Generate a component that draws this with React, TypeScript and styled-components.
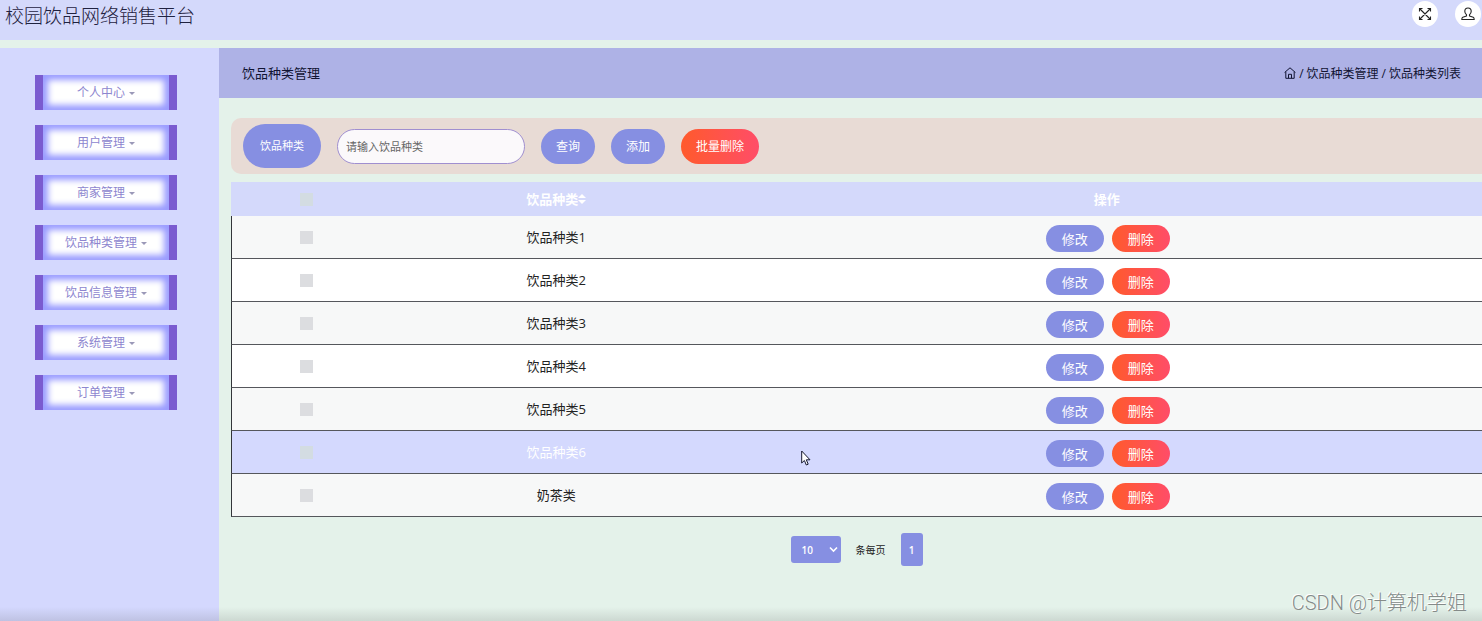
import React, { useState } from "react";
import styled, { createGlobalStyle, css } from "styled-components";

const GlobalStyle = createGlobalStyle`
  *, *::before, *::after { box-sizing: border-box; }
  body {
    margin: 0;
    background: #e4f2ea;
    color: #222;
    font-family: "Open Sans", "Noto Sans CJK SC", sans-serif;
    font-size: 13px;
  }
  button, input, select { font-family: inherit; }
`;

const Page = styled.div`
  position: relative;
  display: flex;
  flex-direction: column;
  gap: 8px;
  min-height: 100vh;
  overflow: hidden;
`;

const TopBar = styled.header`
  display: flex;
  align-items: flex-start;
  justify-content: space-between;
  height: 40px;
  padding: 1px 1px 0 5px;
  background: #d4d9fb;
`;

const SiteTitle = styled.h1`
  margin: 0;
  font-size: 19px;
  line-height: 30px;
  font-weight: 300;
  color: #1f2240;
`;

const TopActions = styled.div`
  display: flex;
  gap: 17px;
`;

const RoundButton = styled.button`
  display: flex;
  align-items: center;
  justify-content: center;
  width: 26px;
  height: 26px;
  padding: 0;
  border: 0;
  border-radius: 50%;
  background: #fff;
  color: #222;
`;

const Body = styled.div`
  display: flex;
  flex: 1;
`;

const Sidebar = styled.nav`
  flex: 0 0 219px;
  padding: 27px 42px 27px 35px;
  background: #d4d8fe;
`;

const NavList = styled.ul`
  display: flex;
  flex-direction: column;
  gap: 15px;
  margin: 0;
  padding: 0;
  list-style: none;
`;

const NavButton = styled.button`
  display: flex;
  align-items: center;
  justify-content: center;
  gap: 4px;
  width: 100%;
  height: 35px;
  padding: 1px 0 0;
  border: solid #7a5bd0;
  border-width: 0 8px;
  background: #fff;
  box-shadow: inset 0 0 6px 5px #999bff;
  color: #8d86cf;
  font-size: 12px;
  line-height: 16px;
`;

const Caret = styled.span`
  border: 3px solid transparent;
  border-top-color: #9a98b8;
  border-bottom: 0;
`;

const Main = styled.main`
  flex: 1;
  min-width: 0;
`;

const PageHead = styled.div`
  display: flex;
  align-items: center;
  justify-content: space-between;
  height: 50px;
  padding: 0 21px 0 23px;
  background: #aeb2e6;
  color: #111433;
`;

const PageTitle = styled.h2`
  margin: 0;
  padding-bottom: 2px;
  font-size: 13px;
  font-weight: 400;
`;

const Crumbs = styled.nav`
  display: flex;
  align-items: center;
  gap: 3px;
  font-size: 12px;

  a {
    display: flex;
    color: inherit;
    text-decoration: none;
  }
`;

const Content = styled.div`
  padding: 20px 0 0 12px;
`;

const Toolbar = styled.form`
  display: flex;
  align-items: center;
  gap: 16px;
  height: 56px;
  margin-bottom: 8px;
  padding: 0 12px;
  border-radius: 10px 0 0 10px;
  background: #e8dbd5;
`;

const pill = css`
  border: 0;
  border-radius: 22px;
  color: #fff;
  background: #868fe2;
`;

const FieldLabel = styled.label`
  ${pill}
  padding: 0 17px;
  font-size: 11px;
  line-height: 44px;
`;

const SearchInput = styled.input`
  width: 188px;
  height: 35px;
  padding: 0 8px;
  border: 1px solid #a08fd0;
  border-radius: 18px;
  background: #fbf9fb;
  font-size: 11px;

  &::placeholder { color: #666; }
`;

const PillButton = styled.button<{ $danger?: boolean; $small?: boolean }>`
  ${pill}
  height: ${(p) => (p.$small ? 27 : 35)}px;
  padding: 0 ${(p) => (p.$small ? 16 : 15)}px;
  font-size: ${(p) => (p.$small ? 13 : 12)}px;
  ${(p) => p.$danger && "background: linear-gradient(90deg, #ff5a2c, #ff4d68);"}
`;

const Table = styled.table`
  width: 100%;
  table-layout: fixed;
  border-spacing: 0;
  text-align: center;
  font-size: 13px;
  line-height: 18px;
`;

const HeadRow = styled.tr`
  height: 34px;
  background: #d4d9fb;
  color: #fff;

  th { padding: 0; font-weight: 700; }
`;

const Row = styled.tr<{ $active?: boolean }>`
  height: 43px;
  background: #fff;
  color: #222;

  &:nth-child(odd) { background: #f7f8f8; }
  ${(p) => p.$active && "&& { background: #d4d9fe; color: #fff; }"}

  td {
    padding: 0;
    border-bottom: 1px solid #55575c;
  }
  td:first-child { border-left: 1px solid #33353a; }
`;

const Check = styled.input<{ $tinted?: boolean }>`
  display: block;
  width: 13px;
  height: 13px;
  margin: 0 auto;
  appearance: none;
  background: ${(p) => (p.$tinted ? "#d3dce2" : "#dcdde0")};

  &:checked { background: #868fe2; }
`;

const SortLabel = styled.span`
  display: inline-flex;
  align-items: center;
`;

const Actions = styled.div`
  display: flex;
  justify-content: center;
  gap: 8px;
  padding: 2px 0 0 2px;
`;

const Pager = styled.div`
  display: flex;
  align-items: center;
  justify-content: center;
  gap: 15px;
  margin-top: 16px;
  font-size: 10px;
`;

const SizeLabel = styled.label`
  display: flex;
  align-items: center;
  gap: 15px;
`;

const SelectBox = styled.span`
  position: relative;
  display: flex;

  svg {
    position: absolute;
    right: 3px;
    top: 10px;
    pointer-events: none;
  }
`;

const SizeSelect = styled.select`
  width: 50px;
  height: 27px;
  padding: 0 11px;
  appearance: none;
  border: 0;
  border-radius: 3px;
  background: #868fe2;
  color: #fff;
  font-size: 10px;
  font-weight: 600;
`;

const PageButton = styled.button`
  width: 22px;
  height: 33px;
  padding: 0;
  border: 0;
  border-radius: 3px;
  background: #868fe2;
  color: #fff;
  font-size: 10px;
  font-weight: 600;
`;

const BottomShade = styled.div`
  position: absolute;
  inset: auto 0 0 0;
  height: 14px;
  background: linear-gradient(transparent, rgba(60, 60, 60, 0.14));
`;

const Watermark = styled.div`
  position: absolute;
  right: 15px;
  bottom: 3px;
  font-family: Roboto, "Noto Sans CJK SC", sans-serif;
  font-size: 20px;
  line-height: 30px;
  font-weight: 300;
  color: #858b89;
  text-shadow: -1px -1px 0 #fff;
`;

const Pointer = styled.svg`
  position: absolute;
  left: 801px;
  top: 450px;
`;

const ExpandIcon = () => (
  <svg width="14" height="14" viewBox="0 0 14 14" fill="none" stroke="currentColor" strokeWidth="1.1">
    <path d="M1.5 1.5l11 11M12.5 1.5l-11 11M1.5 4.5v-3h3M9.5 1.5h3v3M12.5 9.5v3h-3M4.5 12.5h-3v-3" />
  </svg>
);

const PersonIcon = () => (
  <svg width="14" height="14" viewBox="0 0 14 14" fill="none" stroke="currentColor" strokeWidth="1.1" strokeLinejoin="round">
    <path d="M7 1C4.800 1 3.800 2.500 3.800 4.300c0 1.500.7 2.700 1.700 3.400v1.300L1.800 10.300C1 10.700.8 11.500.8 12.500h12.400c0-1-.2-1.800-1-2.200L8.500 9V7.700c1-.7 1.700-1.900 1.700-3.400C10.200 2.500 9.200 1 7 1z" />
  </svg>
);

const HomeIcon = () => (
  <svg width="12" height="12" viewBox="0 0 12 12" fill="none" stroke="currentColor" strokeLinejoin="round">
    <path d="M.6 5.500L6 .8l5.400 4.700M1.800 4.800v6.500h8.400V4.800M4.500 11.200V7.300h3v3.900" />
  </svg>
);

const SortIcon = () => (
  <svg width="8" height="10" viewBox="0 0 8 10" fill="currentColor">
    <path d="M4 0l4 4H0zM4 10L0 6h8z" />
  </svg>
);

const NAV = ["个人中心", "用户管理", "商家管理", "饮品种类管理", "饮品信息管理", "系统管理", "订单管理"];
const KINDS = ["饮品种类1", "饮品种类2", "饮品种类3", "饮品种类4", "饮品种类5", "饮品种类6", "奶茶类"];

export default function App() {
  const [picked, setPicked] = useState<string[]>([]);
  const toggle = (kind: string) =>
    setPicked((all) => (all.includes(kind) ? all.filter((k) => k !== kind) : [...all, kind]));
  const allPicked = picked.length === KINDS.length;

  return (
    <Page>
      <GlobalStyle />
      <TopBar>
        <SiteTitle>校园饮品网络销售平台</SiteTitle>
        <TopActions>
          <RoundButton type="button" aria-label="全屏"><ExpandIcon /></RoundButton>
          <RoundButton type="button" aria-label="用户"><PersonIcon /></RoundButton>
        </TopActions>
      </TopBar>
      <Body>
        <Sidebar>
          <NavList>
            {NAV.map((item) => (
              <li key={item}>
                <NavButton type="button">{item}<Caret /></NavButton>
              </li>
            ))}
          </NavList>
        </Sidebar>
        <Main>
          <PageHead>
            <PageTitle>饮品种类管理</PageTitle>
            <Crumbs>
              <a href="#home" aria-label="首页"><HomeIcon /></a>
              <span>/</span>
              <a href="#kinds">饮品种类管理</a>
              <span>/</span>
              <span>饮品种类列表</span>
            </Crumbs>
          </PageHead>
          <Content>
            <Toolbar onSubmit={(e) => e.preventDefault()}>
              <FieldLabel htmlFor="kind">饮品种类</FieldLabel>
              <SearchInput id="kind" placeholder="请输入饮品种类" />
              <PillButton type="submit">查询</PillButton>
              <PillButton type="button">添加</PillButton>
              <PillButton type="button" $danger>批量删除</PillButton>
            </Toolbar>
            <Table>
              <colgroup>
                <col width="12%" />
                <col width="28%" />
                <col width="60%" />
              </colgroup>
              <thead>
                <HeadRow>
                  <th>
                    <Check
                      type="checkbox"
                      $tinted
                      aria-label="全选"
                      checked={allPicked}
                      onChange={() => setPicked(allPicked ? [] : KINDS)}
                    />
                  </th>
                  <th><SortLabel>饮品种类<SortIcon /></SortLabel></th>
                  <th>操作</th>
                </HeadRow>
              </thead>
              <tbody>
                {KINDS.map((kind) => {
                  const active = kind === "饮品种类6";
                  return (
                    <Row key={kind} $active={active}>
                      <td>
                        <Check
                          type="checkbox"
                          $tinted={active}
                          aria-label={kind}
                          checked={picked.includes(kind)}
                          onChange={() => toggle(kind)}
                        />
                      </td>
                      <td>{kind}</td>
                      <td>
                        <Actions>
                          <PillButton type="button" $small>修改</PillButton>
                          <PillButton type="button" $small $danger>删除</PillButton>
                        </Actions>
                      </td>
                    </Row>
                  );
                })}
              </tbody>
            </Table>
            <Pager>
              <SizeLabel>
                <SelectBox>
                  <SizeSelect defaultValue="10">
                    <option>10</option>
                    <option>20</option>
                    <option>50</option>
                  </SizeSelect>
                  <svg width="9" height="7" viewBox="0 0 9 7" fill="none" stroke="#fff" strokeWidth="1.6">
                    <path d="M1 1.500l3.500 3.500L8 1.500" />
                  </svg>
                </SelectBox>
                条每页
              </SizeLabel>
              <PageButton type="button">1</PageButton>
            </Pager>
          </Content>
        </Main>
      </Body>
      <BottomShade />
      <Watermark>CSDN @计算机学姐</Watermark>
      <Pointer width="10" height="16" viewBox="0 0 10 16" fill="#fff" stroke="#15182e" aria-hidden="true">
        <path d="M.7 1v12l2.700-2.500 1.900 4.500 1.900-.8-1.900-4.400h3.700z" />
      </Pointer>
    </Page>
  );
}
